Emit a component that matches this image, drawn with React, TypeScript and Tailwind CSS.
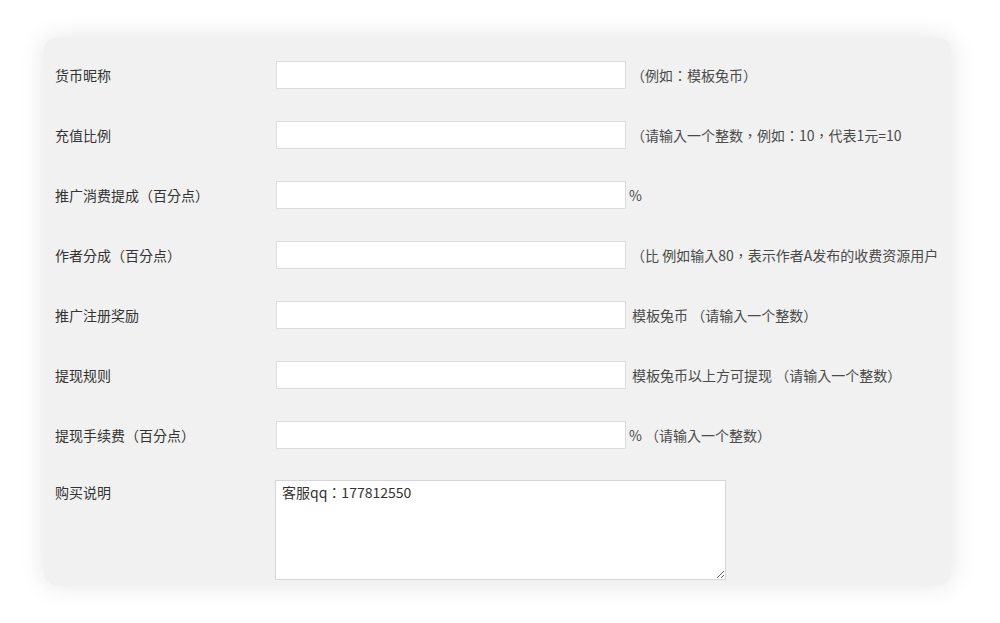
import React from "react";

type Row = {
  label: string;
  hint: string;
  gap: string;
};

const rows: Row[] = [
  { label: "货币昵称", hint: "（例如：模板兔币）", gap: "ml-[5px]" },
  { label: "充值比例", hint: "（请输入一个整数，例如：10，代表1元=10", gap: "ml-[5px]" },
  { label: "推广消费提成（百分点）", hint: "%", gap: "ml-[3px]" },
  { label: "作者分成（百分点）", hint: "（比 例如输入80，表示作者A发布的收费资源用户", gap: "ml-[5px]" },
  { label: "推广注册奖励", hint: "模板兔币 （请输入一个整数）", gap: "ml-[6px]" },
  { label: "提现规则", hint: "模板兔币以上方可提现 （请输入一个整数）", gap: "ml-[6px]" },
  { label: "提现手续费（百分点）", hint: "% （请输入一个整数）", gap: "ml-[3px]" },
];

export default function App() {
  return (
    <div
      className="min-h-screen bg-white pt-[38px] pl-[44px]"
      style={{ fontFamily: '"Noto Sans CJK TC", "Noto Sans CJK SC", "Noto Sans", sans-serif' }}
    >
      <div className="w-[907px] h-[547px] rounded-[12px] bg-[#f1f1f1] shadow-[0_0_26px_rgba(0,0,0,0.11)] pl-[11px] pt-[23px] overflow-hidden">
        <div className="flex flex-col gap-[32px]">
          {rows.map((row) => (
            <div key={row.label} className="flex items-center h-[28px] whitespace-nowrap">
              <label className="w-[221px] shrink-0 text-[14px] text-[#333]">{row.label}</label>
              <input
                type="text"
                className="w-[350px] h-[28px] shrink-0 bg-white border border-[#dcdcdc] px-2 text-[14px] outline-none"
              />
              <span className={`${row.gap} text-[14px] text-[#4a4a4a]`}>{row.hint}</span>
            </div>
          ))}
        </div>

        {/* 购买说明 */}
        <div className="flex items-start mt-[31px]">
          <label className="w-[220px] shrink-0 pt-[2px] text-[14px] text-[#333]">购买说明</label>
          <textarea
            spellCheck={false}
            defaultValue="客服qq：177812550"
            className="w-[451px] h-[100px] bg-white border border-[#d6d6d6] px-[6px] py-[1px] text-[14px] text-[#333] outline-none"
          />
        </div>
      </div>
    </div>
  );
}
